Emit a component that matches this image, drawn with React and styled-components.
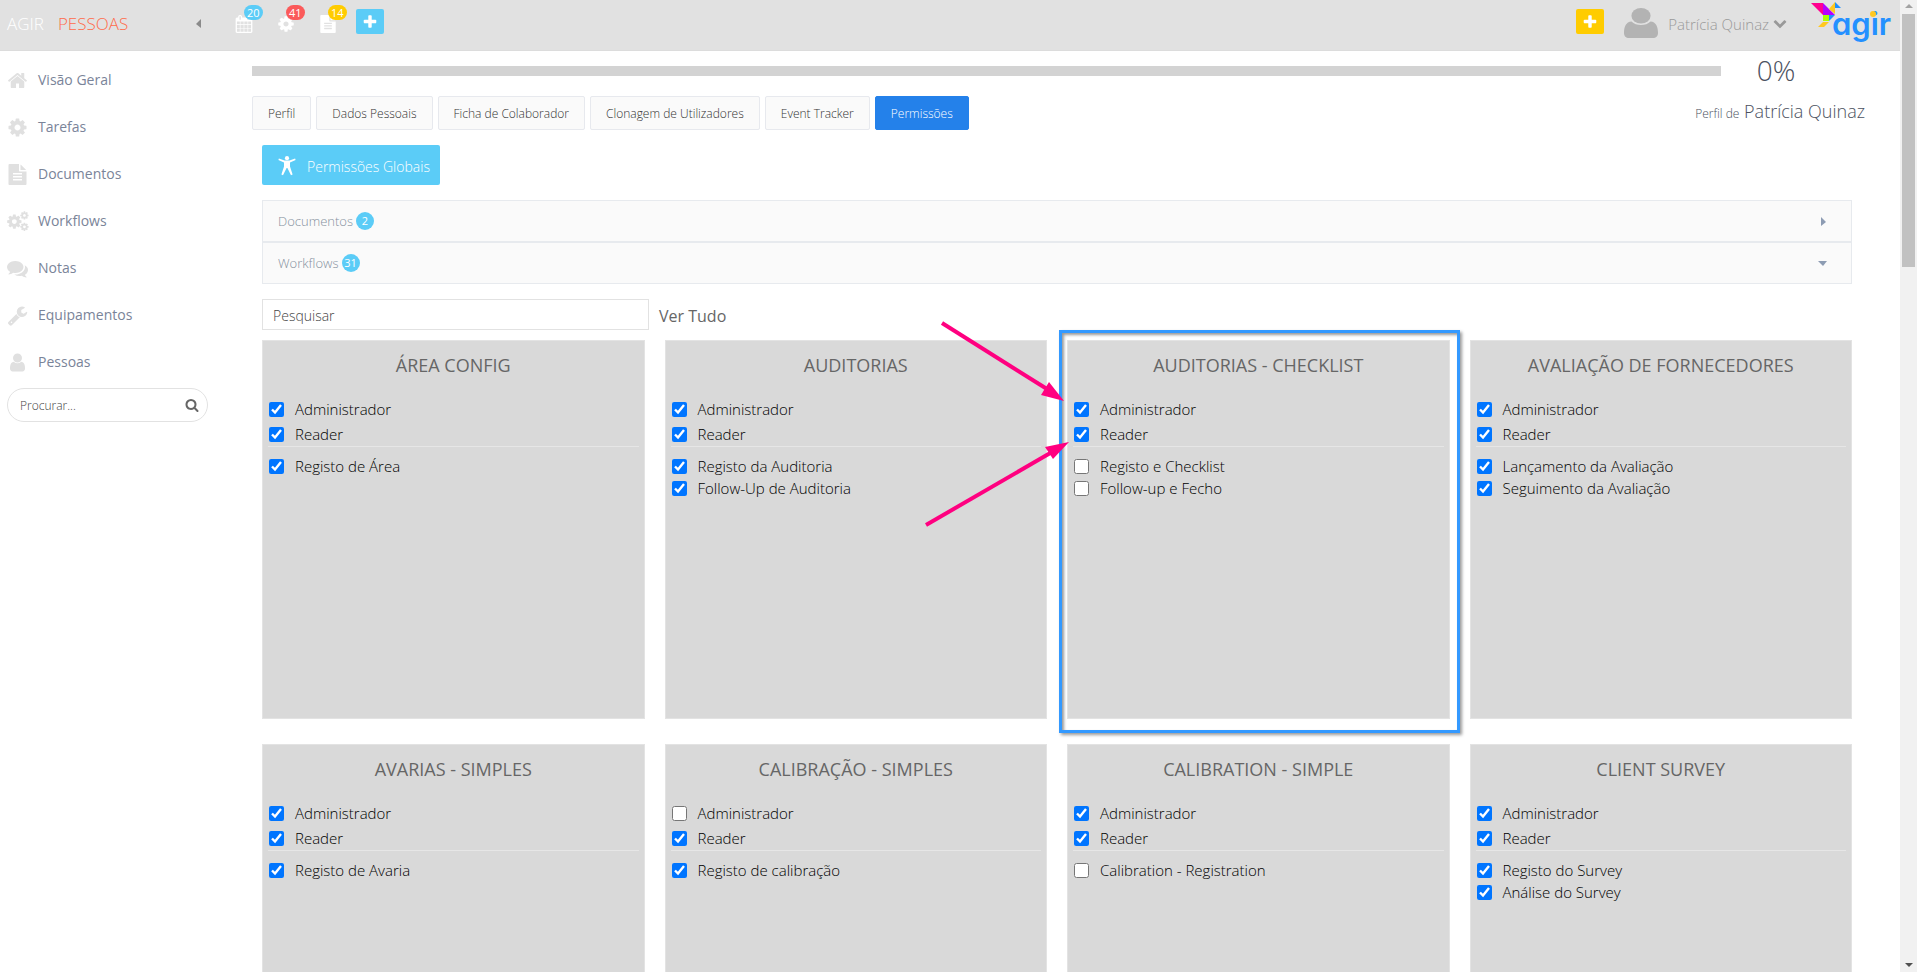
import { useState } from "react";
import styled, { createGlobalStyle } from "styled-components";

const COG =
  "M1152 896q0-106-75-181t-181-75-181 75-75 181 75 181 181 75 181-75 75-181zm512-109v222q0 12-8 23t-20 13l-185 28q-19 54-39 91 35 50 107 138 10 12 10 25t-9 23q-27 37-99 108t-94 71q-12 0-26-9l-138-108q-44 23-91 38-16 136-29 186-7 28-36 28h-222q-14 0-24.5-8.5t-11.5-21.5l-28-184q-49-16-90-37l-141 107q-10 9-25 9-14 0-25-11-126-114-165-168-7-10-7-23 0-12 8-23 15-21 51-66.5t54-70.5q-27-50-41-99l-183-27q-13-2-21-12.5t-8-23.5v-222q0-12 8-23t19-13l186-28q14-46 39-92-40-57-107-138-10-12-10-24 0-10 9-23 26-36 98.5-107.5t94.5-71.5q13 0 26 10l138 107q44-23 91-38 16-136 29-186 7-28 36-28h222q14 0 24.5 8.5t11.5 21.5l28 184q49 16 90 37l142-107q9-9 24-9 13 0 25 10 129 119 165 170 7 8 7 22 0 12-8 23-15 21-51 66.5t-54 70.5q26 50 41 98l183 28q13 2 21 12.5t8 23.5z";

const PATHS = {
  cog: COG,
  home: "M1472 992v480q0 26-19 45t-45 19h-384v-384h-256v384h-384q-26 0-45-19t-19-45v-480q0-1 .5-3t.5-3l575-474 575 474q1 2 1 6zm223-69l-62 74q-8 9-21 11h-3q-13 0-21-7l-692-577-692 577q-12 8-24 7-13-2-21-11l-62-74q-8-10-7-23.5t11-21.5l719-599q32-26 76-26t76 26l244 204v-195q0-14 9-23t23-9h192q14 0 23 9t9 23v408l219 182q10 8 11 21.5t-7 23.5z",
  file: "M1596 476q14 14 28 36h-472v-472q22 14 36 28zm-476 164h544v1056q0 40-28 68t-68 28h-1344q-40 0-68-28t-28-68v-1600q0-40 28-68t68-28h800v544q0 40 28 68t68 28zm160 736v-64q0-14-9-23t-23-9h-704q-14 0-23 9t-9 23v64q0 14 9 23t23 9h704q14 0 23-9t9-23zm0-256v-64q0-14-9-23t-23-9h-704q-14 0-23 9t-9 23v64q0 14 9 23t23 9h704q14 0 23-9t9-23zm0-256v-64q0-14-9-23t-23-9h-704q-14 0-23 9t-9 23v64q0 14 9 23t23 9h704q14 0 23-9t9-23z",
  comments:
    "M1408 768q0 139-94 257t-256.5 186.5-353.5 68.5q-86 0-176-16-124 88-278 128-36 9-86 16h-3q-11 0-20.5-8t-11.5-21q-1-3-1-6.5t.5-6.5 2-6l2.5-5 3.5-5.5 4-5 4.5-5 4-4.5q5-6 23-25t26-29.5 22.5-29 25-38.5 20.5-44q-124-72-195-177t-71-224q0-139 94-257t256.5-186.5 353.5-68.5 353.5 68.5 256.5 186.5 94 257zm384 256q0 120-71 224.5t-195 176.5q10 24 20.5 44t25 38.5 22.5 29 26 29.5 23 25q1 1 4 4.5t4.5 5 4 5 3.5 5.5l2.5 5 2 6 .5 6.5-1 6.5q-3 14-13 22t-22 7q-50-7-86-16-154-40-278-128-90 16-176 16-271 0-472-132 58 4 88 4 161 0 309-45t264-129q125-92 192-212t67-254q0-77-23-152 129 71 204 178t75 230z",
  wrench:
    "M448 1472q0-26-19-45t-45-19-45 19-19 45 19 45 45 19 45-19 19-45zm644-420l-682 682q-37 37-90 37-52 0-91-37l-106-108q-38-36-38-90 0-53 38-91l681-681q39 98 114.5 173.5t173.5 114.5zm634-435q0 39-23 106-47 134-164.5 217.5t-258.5 83.5q-185 0-316.5-131.5t-131.5-316.5 131.5-316.5 316.5-131.5q58 0 121.5 16.5t107.5 46.5q16 11 16 28t-16 28l-293 169v224l193 107q5-3 79-48.5t135.5-81 70.5-35.5q15 0 23.5 10t8.5 25z",
  user: "M1536 1399q0 109-62.5 187t-150.5 78h-854q-88 0-150.5-78t-62.5-187q0-85 8.5-160.5t31.5-152 58.5-131 94-89 134.5-34.5q131 128 313 128t313-128q76 0 134.5 34.5t94 89 58.5 131 31.5 152 8.5 160.5zm-256-887q0 159-112.5 271.5t-271.5 112.5-271.5-112.5-112.5-271.5 112.5-271.5 271.5-112.5 271.5 112.5 112.5 271.5z",
  search:
    "M1216 832q0-185-131.5-316.5t-316.5-131.5-316.5 131.5-131.5 316.5 131.5 316.5 316.5 131.5 316.5-131.5 131.5-316.5zm512 832q0 52-38 90t-90 38q-54 0-90-38l-343-342q-179 124-399 124-143 0-273.5-55.5t-225-150-150-225-55.5-273.5 55.5-273.5 150-225 225-150 273.5-55.5 273.5 55.5 225 150 150 225 55.5 273.5q0 220-124 399l343 343q37 37 37 90z",
  plus: "M1600 736v192q0 40-28 68t-68 28h-416v416q0 40-28 68t-68 28h-192q-40 0-68-28t-28-68v-416h-416q-40 0-68-28t-28-68v-192q0-40 28-68t68-28h416v-416q0-40 28-68t68-28h192q40 0 68 28t28 68v416h416q40 0 68 28t28 68z",
  chevron:
    "M1683 808l-742 741q-19 19-45 19t-45-19l-742-741q-19-19-19-45.5t19-45.5l166-165q19-19 45-19t45 19l531 531 531-531q19-19 45-19t45 19l166 165q19 19 19 45.5t-19 45.5z",
  calendar:
    "M192 1664h288v-288h-288v288zm352 0h320v-288h-320v288zm-352-352h288v-320h-288v320zm352 0h320v-320h-320v320zm-352-384h288v-288h-288v288zm736 736h320v-288h-320v288zm-384-736h320v-288h-320v288zm768 736h288v-288h-288v288zm-384-352h320v-320h-320v320zm-352-864v-288q0-13-9.5-22.5t-22.5-9.5h-64q-13 0-22.5 9.5t-9.5 22.5v288q0 13 9.5 22.5t22.5 9.5h64q13 0 22.5-9.5t9.5-22.5zm736 864h288v-320h-288v320zm-384-384h320v-288h-320v288zm384 0h288v-288h-288v288zm32-480v-288q0-13-9.5-22.5t-22.5-9.5h-64q-13 0-22.5 9.5t-9.5 22.5v288q0 13 9.5 22.5t22.5 9.5h64q13 0 22.5-9.5t9.5-22.5zm384-64v1280q0 52-38 90t-90 38h-1408q-52 0-90-38t-38-90v-1280q0-52 38-90t90-38h128v-96q0-66 47-113t113-47h64q66 0 113 47t47 113v96h384v-96q0-66 47-113t113-47h64q66 0 113 47t47 113v96h128q52 0 90 38t38 90z",
};

const Icon = ({ name, size }) => (
  <svg width={size} height={size} viewBox="0 0 1792 1792" fill="currentColor" aria-hidden="true">
    <path d={PATHS[name]} />
  </svg>
);

const CogsIcon = () => (
  <svg width="22" height="21" viewBox="0 0 22 21" fill="currentColor" aria-hidden="true">
    <g transform="translate(-1 2.2) scale(.0093)">
      <path d={COG} />
    </g>
    <g transform="translate(12.6 -.4) scale(.0054)">
      <path d={COG} />
    </g>
    <g transform="translate(12.6 11) scale(.0054)">
      <path d={COG} />
    </g>
  </svg>
);

const Caret = ({ dir }) => {
  const points = { left: "5,0 5,9 0,5", right: "0,0 5,5 0,9", down: "0,0 9,0 5,5" };
  return (
    <svg width="9" height="9" viewBox={dir === "down" ? "0 -2 9 9" : "-3 0 9 9"} fill="currentColor" aria-hidden="true">
      <polygon points={points[dir]} />
    </svg>
  );
};

const AvatarIcon = () => (
  <svg width="34" height="30" viewBox="0 0 34 30" fill="#b3b3b3" aria-hidden="true">
    <ellipse cx="17" cy="7.8" rx="9.6" ry="7.8" />
    <path d="M7.5 13.5c2.4 2.4 5.7 3.6 9.5 3.6s7.1-1.2 9.5-3.6c5.5.5 7.500 5 7.500 11.500 0 3-2 5-5 5h-24c-3 0-5-2-5-5 0-6.500 2-11 7.500-11.500z" />
  </svg>
);

const PersonIcon = () => (
  <svg width="18" height="20" viewBox="0 0 18 20" fill="currentColor" aria-hidden="true">
    <circle cx="9" cy="2.2" r="2.1" />
    <path d="M.9 2.6l5.600 2h5l5.600-2 .5 1.300-5.600 2.700v4l2.600 8-1.600.7-3.600-7.300h-.8l-3.600 7.300-1.600-.7 2.600-8v-4l-5.600-2.700z" />
  </svg>
);

const Logo = () => (
  <svg width="82" height="47" viewBox="0 0 82 47" role="img" aria-label="agir">
    <polygon points="0,3 12,3 12,15" fill="#ff0090" />
    <polygon points="12,3 24,15 12,15" fill="#b400ff" />
    <rect x="12" y="15" width="6" height="6" fill="#aaff00" />
    <polygon points="18,15 24,15 18,21" fill="#1e90ff" />
    <polygon points="12,22 18,22 13,27 7,27" fill="#ffc820" />
    <polygon points="18,9 24,2 24,14" fill="#ffc820" />
    <polygon points="24,2 30,8 24,8" fill="#1e90ff" />
    <LogoText x="21" y="35">
      agir
    </LogoText>
    <circle cx="62" cy="14" r="3" fill="#ffc820" />
  </svg>
);

const NAV = [
  ["home", "Visão Geral"],
  ["cog", "Tarefas"],
  ["file", "Documentos"],
  ["cogs", "Workflows"],
  ["comments", "Notas"],
  ["wrench", "Equipamentos"],
  ["user", "Pessoas"],
];

const ALERTS = [
  { icon: "calendar", count: 20, color: "#5bccf7", label: "Calendário" },
  { icon: "cog", count: 41, color: "#fb5a5a", label: "Tarefas" },
  { icon: "file", count: 14, color: "#ffcc00", label: "Documentos" },
];

const TABS = [
  "Perfil",
  "Dados Pessoais",
  "Ficha de Colaborador",
  "Clonagem de Utilizadores",
  "Event Tracker",
  "Permissões",
];

const CARDS = [
  { title: "ÁREA CONFIG", steps: [["Registo de Área", true]] },
  { title: "AUDITORIAS", steps: [["Registo da Auditoria", true], ["Follow-Up de Auditoria", true]] },
  {
    title: "AUDITORIAS - CHECKLIST",
    steps: [["Registo e Checklist", false], ["Follow-up e Fecho", false]],
    highlighted: true,
  },
  { title: "AVALIAÇÃO DE FORNECEDORES", steps: [["Lançamento da Avaliação", true], ["Seguimento da Avaliação", true]] },
  { title: "AVARIAS - SIMPLES", steps: [["Registo de Avaria", true]] },
  { title: "CALIBRAÇÃO - SIMPLES", admin: false, steps: [["Registo de calibração", true]] },
  { title: "CALIBRATION - SIMPLE", steps: [["Calibration - Registration", false]] },
  { title: "CLIENT SURVEY", steps: [["Registo do Survey", true], ["Análise do Survey", true]] },
];

const Check = ({ label, checked }) => (
  <CheckLabel>
    <Checkbox type="checkbox" defaultChecked={checked} />
    {label}
  </CheckLabel>
);

const Annotation = () => (
  <>
    <HighlightFrame />
    <Arrows width="150" height="208" viewBox="-145 -20 150 208" aria-hidden="true">
      <g stroke="#ff0080" strokeWidth="4">
        <line x1="-125" y1="-17" x2="-20" y2="49" />
        <line x1="-141" y1="185" x2="-15" y2="112" />
      </g>
      <polygon points="-18,42 -26,55 -3,61" fill="#ff0080" />
      <polygon points="-22,107 -14,119 2,102" fill="#ff0080" />
    </Arrows>
  </>
);

const PermissionCard = ({ title, admin = true, steps, highlighted }) => (
  <Card>
    <CardTitle>{title}</CardTitle>
    <Roles>
      <Check label="Administrador" checked={admin} />
      <Check label="Reader" checked />
    </Roles>
    <Steps>
      {steps.map(([label, checked]) => (
        <Check key={label} label={label} checked={checked} />
      ))}
    </Steps>
    {highlighted && <Annotation />}
  </Card>
);

const App = () => {
  const [activeTab, setActiveTab] = useState("Permissões");

  return (
    <>
      <GlobalStyle />
      <Page>
        <Screen>
          <Header>
            <Brand>
              <span>AGIR</span>
              <BrandModule>PESSOAS</BrandModule>
              <Collapse aria-label="Recolher menu">
                <Caret dir="left" />
              </Collapse>
            </Brand>
            <Alerts>
              {ALERTS.map((a) => (
                <Alert key={a.icon} aria-label={a.label}>
                  <Icon name={a.icon} size={18} />
                  <AlertCount $color={a.color}>{a.count}</AlertCount>
                </Alert>
              ))}
              <AddButton $color="#5bccf7" aria-label="Adicionar">
                <Icon name="plus" size={16} />
              </AddButton>
            </Alerts>
            <Account>
              <AddButton $color="#ffcc00" aria-label="Novo">
                <Icon name="plus" size={16} />
              </AddButton>
              <UserButton>
                <AvatarIcon />
                <span>Patrícia Quinaz</span>
                <Icon name="chevron" size={14} />
              </UserButton>
              <Logo />
            </Account>
          </Header>

          <Body>
            <Sidebar>
              <nav>
                {NAV.map(([icon, label]) => (
                  <NavItem key={label} href="#">
                    <NavIcon>{icon === "cogs" ? <CogsIcon /> : <Icon name={icon} size={21} />}</NavIcon>
                    {label}
                  </NavItem>
                ))}
              </nav>
              <SideSearch>
                <SideInput type="text" placeholder="Procurar..." aria-label="Procurar" />
                <SearchButton aria-label="Pesquisar">
                  <Icon name="search" size={14} />
                </SearchButton>
              </SideSearch>
            </Sidebar>

            <Main>
              <ProgressRow>
                <ProgressBar role="progressbar" aria-valuenow={0} aria-label="Progresso" />
                <Percent>0%</Percent>
              </ProgressRow>

              <TabRow>
                <Tabs>
                  {TABS.map((tab) => (
                    <Tab key={tab} $active={tab === activeTab} onClick={() => setActiveTab(tab)}>
                      {tab}
                    </Tab>
                  ))}
                </Tabs>
                <ProfileName>
                  <small>Perfil de</small> Patrícia Quinaz
                </ProfileName>
              </TabRow>

              <Panel>
                <GlobalButton>
                  <PersonIcon />
                  Permissões Globais
                </GlobalButton>

                <Accordion>
                  <AccordionItem>
                    Documentos <Count>2</Count>
                    <Caret dir="right" />
                  </AccordionItem>
                  <AccordionItem>
                    Workflows <Count>31</Count>
                    <Caret dir="down" />
                  </AccordionItem>
                </Accordion>

                <Filter>
                  <FilterInput type="text" placeholder="Pesquisar" aria-label="Pesquisar workflows" />
                  <ShowAll href="#">Ver Tudo</ShowAll>
                </Filter>

                <Cards>
                  {CARDS.map((card) => (
                    <PermissionCard key={card.title} {...card} />
                  ))}
                </Cards>
              </Panel>
            </Main>
          </Body>
        </Screen>

        <Scrollbar aria-hidden="true">
          <ScrollArrow $color="#a3a3a3" viewBox="0 0 17 14">
            <polygon points="5,8 9,4 13,8" />
          </ScrollArrow>
          <ScrollThumb />
          <ScrollArrow $color="#505050" viewBox="0 0 17 14">
            <polygon points="5,5 13,5 9,9" />
          </ScrollArrow>
        </Scrollbar>
      </Page>
    </>
  );
};

// Styled components
const GlobalStyle = createGlobalStyle`
  * {
    box-sizing: border-box;
  }
  body {
    margin: 0;
    background: #fff;
    font-family: "Open Sans", "Noto Sans", sans-serif;
    font-weight: 300;
  }
  button, input {
    font: inherit;
  }
  button {
    border: none;
    padding: 0;
    cursor: pointer;
  }
  a {
    text-decoration: none;
  }
  svg {
    display: block;
    flex-shrink: 0;
  }
`;

const Page = styled.div`
  display: flex;
  height: 100vh;
  overflow: hidden;
`;

const Screen = styled.div`
  flex: 1;
  min-width: 0;
`;

const Header = styled.header`
  display: flex;
  height: 51px;
  background: #e1e1e1;
  border-bottom: 1px solid #dcdcdc;
`;

const Brand = styled.div`
  display: flex;
  align-items: center;
  width: 235px;
  padding: 0 33px 4px 7px;
  gap: 14px;
  font-size: 17px;
  color: #fff;
`;

const BrandModule = styled.span`
  color: #ff6c4c;
`;

const Collapse = styled.button`
  margin-left: auto;
  background: none;
  color: #8a8a8a;
`;

const Alerts = styled.div`
  display: flex;
  align-items: flex-start;
  padding-top: 9px;
`;

const Alert = styled.button`
  position: relative;
  width: 42px;
  padding-top: 6px;
  background: none;
  color: #fff;
`;

const AlertCount = styled.span`
  position: absolute;
  top: -4px;
  left: 9px;
  min-width: 18px;
  height: 15px;
  padding: 0 3px;
  border-radius: 8px;
  background: ${(p) => p.$color};
  font-size: 11px;
  font-weight: 400;
  line-height: 15px;
`;

const AddButton = styled.button`
  display: flex;
  align-items: center;
  justify-content: center;
  width: 28px;
  height: 25px;
  border-radius: 2px;
  background: ${(p) => p.$color};
  color: #fff;

  ${Alerts} & {
    margin-left: -5px;
  }
`;

const Account = styled.div`
  display: flex;
  align-items: flex-start;
  margin-left: auto;
  padding-right: 7px;

  > ${AddButton} {
    margin-top: 9px;
  }
`;

const UserButton = styled.button`
  display: flex;
  align-items: center;
  height: 46px;
  margin: 0 24px 0 20px;
  background: none;
  color: #999;
  font-size: 15px;

  span {
    margin: 2px 4px 0 10px;
  }
`;

const LogoText = styled.text`
  fill: #2490ff;
  font-family: Inter, sans-serif;
  font-size: 31px;
  font-weight: 600;
  font-feature-settings: "cv11";
`;

const Body = styled.div`
  display: flex;
`;

const Sidebar = styled.aside`
  flex: 0 0 252px;
  padding: 5px 44px 0 7px;
`;

const NavItem = styled.a`
  display: flex;
  align-items: center;
  height: 47px;
  color: #7a8499;
  font-size: 14px;
  font-weight: 400;
`;

const NavIcon = styled.span`
  width: 31px;
  padding-top: 2px;
  color: #e0e0e0;
`;

const SideSearch = styled.div`
  display: flex;
  align-items: center;
  height: 34px;
  margin-top: 3px;
  padding: 0 8px 0 12px;
  border: 1px solid #e2e2e2;
  border-radius: 17px;
`;

const SideInput = styled.input`
  flex: 1;
  min-width: 0;
  padding: 0;
  border: none;
  outline: none;
  background: none;
  font-size: 12px;

  &::placeholder {
    color: #444;
  }
`;

const SearchButton = styled.button`
  background: none;
  color: #666;
`;

const Main = styled.main`
  flex: 1;
  min-width: 0;
  padding: 3px 35px 0 0;
`;

const ProgressRow = styled.div`
  display: flex;
  align-items: center;
  height: 34px;
  margin-right: 34px;
`;

const ProgressBar = styled.div`
  flex: 1;
  height: 10px;
  background: #d3d3d3;
`;

const Percent = styled.div`
  width: 110px;
  padding-bottom: 2px;
  color: #4b5160;
  font-size: 28px;
  line-height: 32px;
  text-align: center;
`;

const TabRow = styled.div`
  display: flex;
  justify-content: space-between;
  align-items: flex-start;
  margin-top: 8px;
`;

const Tabs = styled.div`
  display: flex;
  gap: 5px;
`;

const Tab = styled.button`
  height: 34px;
  padding: 0 15px;
  border: 1px solid ${(p) => (p.$active ? "#2481ea" : "#e7e9ee")};
  border-radius: 2px;
  background: ${(p) => (p.$active ? "#2481ea" : "#fafafa")};
  color: ${(p) => (p.$active ? "#fff" : "#333")};
  font-size: 12px;
`;

const ProfileName = styled.div`
  color: #4b5160;
  font-size: 18px;
  line-height: 30px;

  small {
    font-size: 12px;
  }
`;

const Panel = styled.div`
  padding: 15px 13px 0 10px;
`;

const GlobalButton = styled.button`
  display: flex;
  align-items: center;
  gap: 11px;
  height: 40px;
  padding: 2px 10px 0 16px;
  border-radius: 2px;
  background: #5bccf7;
  color: #fff;
  font-size: 14px;
`;

const Accordion = styled.div`
  margin-top: 15px;
`;

const AccordionItem = styled.button`
  display: flex;
  align-items: center;
  gap: 3px;
  width: 100%;
  height: 42px;
  padding: 0 24px 0 15px;
  border: 1px solid #e7eaee;
  background: #fafafa;
  color: #86919e;
  font-size: 13px;

  svg {
    margin-left: auto;
    color: #8d9cb3;
  }
`;

const Count = styled.span`
  min-width: 18px;
  height: 18px;
  border-radius: 9px;
  background: #5bccf7;
  color: #fff;
  font-size: 11px;
  font-weight: 400;
  line-height: 18px;
  text-align: center;
`;

const Filter = styled.div`
  display: flex;
  align-items: center;
  gap: 10px;
  margin-top: 15px;
`;

const FilterInput = styled.input`
  width: 387px;
  height: 31px;
  padding: 2px 10px 0;
  border: 1px solid #e2e2e2;
  outline: none;
  font-size: 14px;

  &::placeholder {
    color: #444;
  }
`;

const ShowAll = styled.a`
  padding-top: 2px;
  color: #666;
  font-size: 16px;
  font-weight: 400;
`;

const Cards = styled.div`
  display: grid;
  grid-template-columns: repeat(4, 1fr);
  gap: 25px 20px;
  margin-top: 10px;
`;

const Card = styled.section`
  position: relative;
  min-height: 379px;
  padding: 12px 5px;
  border: 1px solid #e3e3e3;
  background: #d9d9d9;
`;

const CardTitle = styled.h3`
  margin: 0 0 21px;
  color: #666;
  font-size: 18px;
  font-weight: 400;
  line-height: 24px;
  text-align: center;
`;

const CheckLabel = styled.label`
  display: flex;
  align-items: center;
  gap: 11px;
  height: 22px;
  padding-left: 1px;
  color: #000;
  font-size: 15px;
`;

const Checkbox = styled.input`
  width: 15px;
  height: 15px;
  margin: 0;
`;

const Roles = styled.div`
  display: grid;
  gap: 3px;
  padding-bottom: 1px;
  border-bottom: 1px solid #e6e6e6;
`;

const Steps = styled.div`
  padding-top: 8px;
`;

const HighlightFrame = styled.div`
  position: absolute;
  inset: -11px -11px -15px -9px;
  border: 3px solid #3399ff;
  box-shadow: 2px 2px 3px rgba(0, 0, 0, 0.4), inset 2px 2px 3px rgba(0, 0, 0, 0.4);
  pointer-events: none;
`;

const Arrows = styled.svg`
  position: absolute;
  top: -21px;
  left: -146px;
  z-index: 1;
  pointer-events: none;
`;

const Scrollbar = styled.div`
  display: flex;
  flex-direction: column;
  flex: 0 0 17px;
  background: #f1f1f1;
`;

const ScrollArrow = styled.svg`
  height: 14px;
  fill: ${(p) => p.$color};

  &:last-child {
    margin-top: auto;
  }
`;

const ScrollThumb = styled.div`
  height: 26%;
  margin: 0 2px;
  background: #c1c1c1;
`;

export default App;
